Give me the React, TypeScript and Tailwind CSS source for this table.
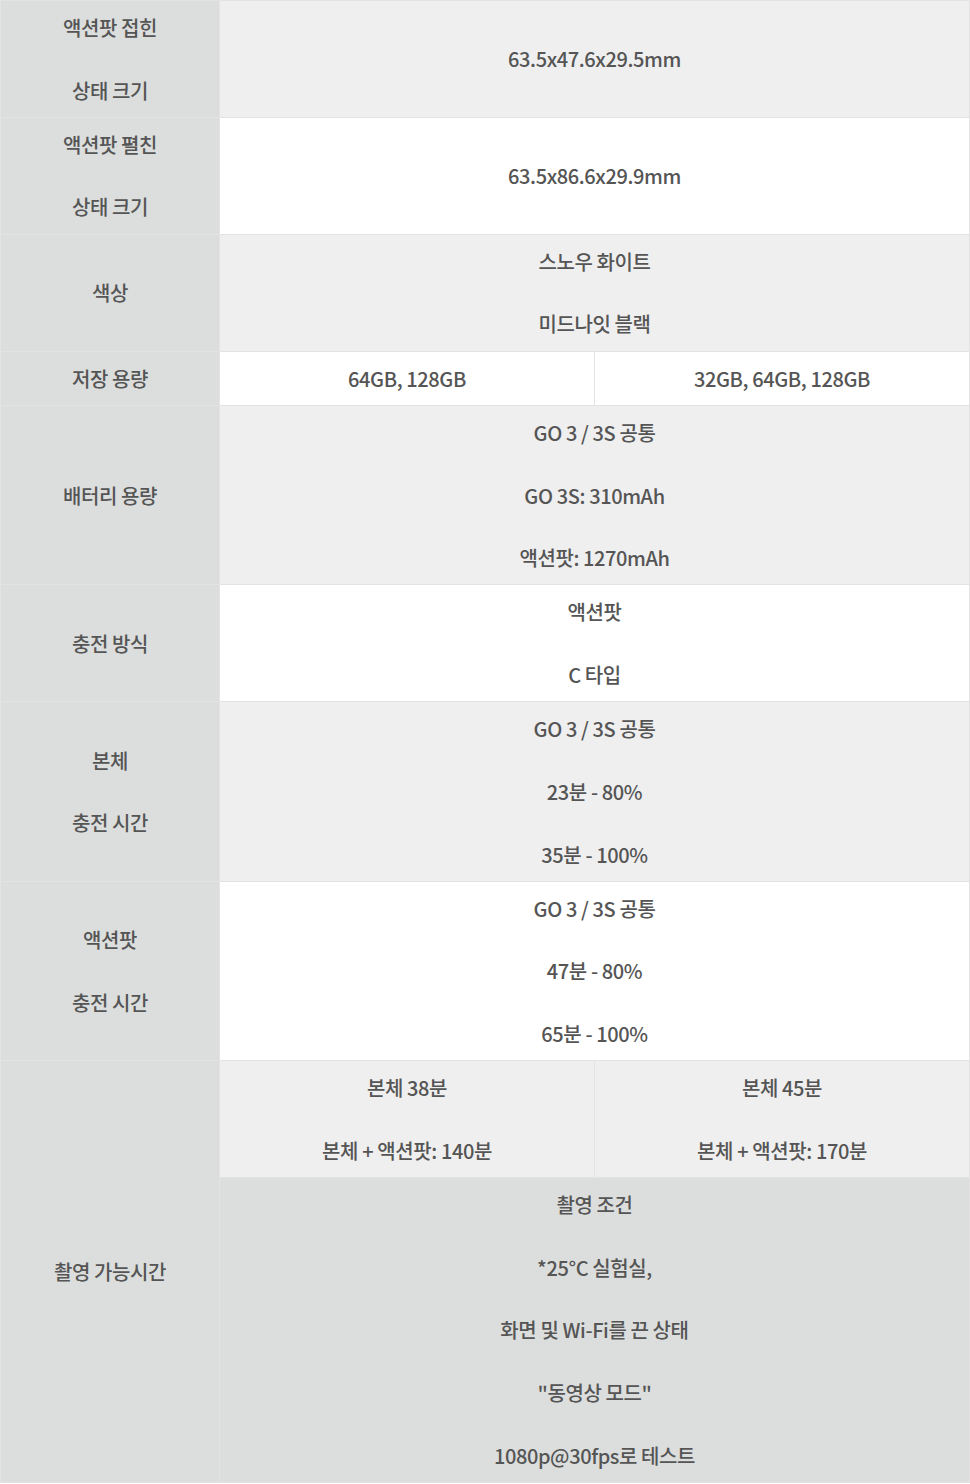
const font = { fontFamily: '"Noto Sans CJK KR", "Noto Sans", sans-serif' }

type Cell = { lines: string[]; span?: number }

function Lines({ lines }: { lines: string[] }) {
  return (
    <>
      {lines.map((l, i) => (
        <span key={i}>
          {i > 0 && (
            <>
              <br />
              <br />
            </>
          )}
          {l}
        </span>
      ))}
    </>
  )
}

const td = "border border-[#e3e3e3] px-2 py-[11px] text-center align-middle"

const rows: { head: string[]; cells: Cell[]; bg: string }[] = [
  { head: ["액션팟 접힌", "상태 크기"], cells: [{ lines: ["63.5x47.6x29.5mm"], span: 2 }], bg: "bg-[#efefef]" },
  { head: ["액션팟 펼친", "상태 크기"], cells: [{ lines: ["63.5x86.6x29.9mm"], span: 2 }], bg: "bg-white" },
  { head: ["색상"], cells: [{ lines: ["스노우 화이트", "미드나잇 블랙"], span: 2 }], bg: "bg-[#efefef]" },
  { head: ["저장 용량"], cells: [{ lines: ["64GB, 128GB"] }, { lines: ["32GB, 64GB, 128GB"] }], bg: "bg-white" },
  {
    head: ["배터리 용량"],
    cells: [{ lines: ["GO 3 / 3S 공통", "GO 3S: 310mAh", "액션팟: 1270mAh"], span: 2 }],
    bg: "bg-[#efefef]",
  },
  { head: ["충전 방식"], cells: [{ lines: ["액션팟", "C 타입"], span: 2 }], bg: "bg-white" },
  {
    head: ["본체", "충전 시간"],
    cells: [{ lines: ["GO 3 / 3S 공통", "23분 - 80%", "35분 - 100%"], span: 2 }],
    bg: "bg-[#efefef]",
  },
  {
    head: ["액션팟", "충전 시간"],
    cells: [{ lines: ["GO 3 / 3S 공통", "47분 - 80%", "65분 - 100%"], span: 2 }],
    bg: "bg-white",
  },
]

export default function App() {
  return (
    <div className="w-[970px] bg-white" style={font}>
      <table className="w-[969px] table-fixed border-collapse text-[20px] font-medium leading-[31.3px] tracking-[-0.4px] text-[#555]">
        <colgroup>
          <col className="w-[219px]" />
          <col className="w-[375px]" />
          <col className="w-[375px]" />
        </colgroup>
        <tbody>
          {rows.map((r, i) => (
            <tr key={i} className={r.bg}>
              <th className={`${td} bg-[#dcdedd] font-medium`}>
                <Lines lines={r.head} />
              </th>
              {r.cells.map((c, j) => (
                <td key={j} colSpan={c.span} className={td}>
                  <Lines lines={c.lines} />
                </td>
              ))}
            </tr>
          ))}
          <tr className="bg-[#efefef]">
            <th rowSpan={2} className={`${td} bg-[#dcdedd] font-medium`}>
              촬영 가능시간
            </th>
            <td className={td}>
              <Lines lines={["본체 38분", "본체 + 액션팟: 140분"]} />
            </td>
            <td className={td}>
              <Lines lines={["본체 45분", "본체 + 액션팟: 170분"]} />
            </td>
          </tr>
          <tr className="bg-[#dcdedd]">
            <td colSpan={2} className={td}>
              <Lines
                lines={["촬영 조건", "*25°C 실험실,", "화면 및 Wi-Fi를 끈 상태", '"동영상 모드"', "1080p@30fps로 테스트"]}
              />
            </td>
          </tr>
        </tbody>
      </table>
    </div>
  )
}
